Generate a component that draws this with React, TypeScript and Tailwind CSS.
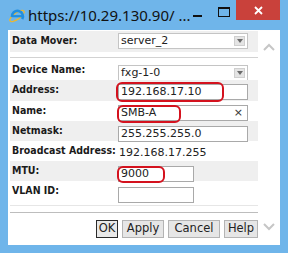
import React from "react";

const labelFont = { fontFamily: '"DejaVu Sans Condensed", "Liberation Sans", sans-serif' };
const valueFont = { fontFamily: '"DejaVu Sans", Verdana, sans-serif' };

const Label = ({ children }: { children: React.ReactNode }) => (
  <div className="w-[108px] shrink-0 pt-[3px] pl-[2px] text-[10.5px] leading-[13px] font-bold text-[#1a1a1a]" style={labelFont}>
    {children}
  </div>
);

const Select = ({ value }: { value: string }) => (
  <div className="w-[130px] h-[16px] bg-white border border-[#c4c4c4] flex items-center justify-between pl-[2px] pr-[2px]">
    <span className="text-[11px] leading-[14px] text-[#222]" style={valueFont}>{value}</span>
    <span className="w-[11px] h-[10px] bg-[#e4e4e4] border border-[#cfcfcf] flex items-center justify-center">
      <span className="w-0 h-0 border-l-[3px] border-r-[3px] border-t-[4px] border-l-transparent border-r-transparent border-t-[#6a6a6a]" />
    </span>
  </div>
);

const Input = ({ value, w, oval, clear }: { value?: string; w: string; oval?: string; clear?: boolean }) => (
  <div className={`relative ${w} h-[16px] bg-white border border-[#a9a9a9] flex items-center justify-between pl-[2px] pr-[4px]`}>
    <span className="text-[11px] leading-[14px] text-[#222]" style={valueFont}>{value}</span>
    {clear && <span className="text-[11px] leading-[14px] text-[#333]" style={valueFont}>×</span>}
    {oval && <div className={`absolute border-2 border-[#d4121e] rounded-[6px] ${oval}`} />}
  </div>
);

const Row = ({ gray, h, children }: { gray?: boolean; h: string; children: React.ReactNode }) => (
  <div className={`flex items-start ${h} ${gray ? "bg-[#efefef]" : "bg-white"}`}>{children}</div>
);

const Btn = ({ children, w, focus }: { children: React.ReactNode; w: string; focus?: boolean }) => (
  <div
    className={`${w} h-[18px] flex items-center justify-center text-[11.5px] text-[#222] ${focus ? "border border-[#2a2a2a] bg-[#e8e8e8]" : "border border-[#b4b4b4] bg-[#e6e6e6]"}`}
    style={valueFont}
  >
    {children}
  </div>
);

export default function App() {
  return (
    <div className="w-[288px] h-[253px] bg-[#6fb5ea] flex flex-col overflow-hidden">
      {/* title bar */}
      <div className="h-[30px] flex items-start shrink-0">
        <svg className="ml-[8px] mt-[6px]" width="18" height="18" viewBox="0 0 18 18">
          <ellipse cx="9" cy="10" rx="8.5" ry="3.2" fill="none" stroke="#e8b735" strokeWidth="1.3" transform="rotate(-35 9 10)" />
          <path d="M4 11 A5.5 5.5 0 1 1 14.2 13.2" fill="none" stroke="#1f8fe0" strokeWidth="2.6" />
          <path d="M4.2 10.2 H14.5" stroke="#1f8fe0" strokeWidth="2.2" />
        </svg>
        <span className="ml-[2px] mt-[5px] text-[15px] leading-[20px] text-[#111]" style={{ fontFamily: '"Noto Sans", "Open Sans", sans-serif' }}>
          https://10.29.130.90/ ...
        </span>
        <div className="ml-auto flex items-start">
          <div className="mt-[15px] w-[9px] h-[2px] bg-[#111] mr-[16px]" />
          <div className="mt-[7px] w-[12px] h-[10px] border border-[#111] border-t-2 mr-[6px]" />
          <div className="w-[44px] h-[20px] bg-[#c9413b] flex items-center justify-center mr-[8px]">
            <svg width="9" height="9" viewBox="0 0 9 9">
              <path d="M1 1 L8 8 M8 1 L1 8" stroke="white" strokeWidth="1.8" />
            </svg>
          </div>
        </div>
      </div>

      {/* content */}
      <div className="mx-[8px] h-[215px] bg-white flex">
        <div className="w-[250px] pl-[2px] pt-[1px] flex flex-col">
          <div className="flex items-start h-[21px] bg-[#efefef]">
            <Label>Data Mover:</Label>
            <div className="pt-[2px]">
              <Select value="server_2" />
            </div>
          </div>
          <div className="h-[5px]" />
          <div className="h-[1px] bg-[#d2d2d2]" />
          <div className="h-[2px]" />

          <Row h="h-[20px]">
            <Label>Device Name:</Label>
            <div className="pt-[5px]"><Select value="fxg-1-0" /></div>
          </Row>
          <Row h="h-[21px]" gray>
            <Label>Address:</Label>
            <div className="pt-[4px]">
              <Input value="192.168.17.10" w="w-[130px]" oval="-left-[3px] -top-[3px] w-[108px] h-[20px]" />
            </div>
          </Row>
          <Row h="h-[20px]">
            <Label>Name:</Label>
            <div className="pt-[4px]">
              <Input value="SMB-A" w="w-[130px]" clear oval="-left-[2px] -top-[1px] w-[64px] h-[18px]" />
            </div>
          </Row>
          <Row h="h-[20px]" gray>
            <Label>Netmask:</Label>
            <div className="pt-[5px]"><Input value="255.255.255.0" w="w-[130px]" /></div>
          </Row>
          <Row h="h-[20px]">
            <Label>Broadcast Address:</Label>
            <div className="pt-[5px] pl-[1px] text-[11px] leading-[14px] text-[#222]" style={valueFont}>192.168.17.255</div>
          </Row>
          <Row h="h-[20px]" gray>
            <Label>MTU:</Label>
            <div className="pt-[5px]">
              <Input value="9000" w="w-[76px]" oval="-left-[2px] -top-[1px] w-[48px] h-[17px]" />
            </div>
          </Row>
          <Row h="h-[24px]">
            <Label>VLAN ID:</Label>
            <div className="pt-[6px]"><Input w="w-[76px]" /></div>
          </Row>

          <div className="h-[1px] bg-[#e6e6e6]" />
          <div className="h-[6px]" />
          <div className="h-[1px] bg-[#bdbdbd]" />
          <div className="flex justify-end gap-[4px] mt-[7px]">
            <Btn w="w-[22px]" focus>OK</Btn>
            <Btn w="w-[42px]">Apply</Btn>
            <Btn w="w-[52px]">Cancel</Btn>
            <Btn w="w-[34px]">Help</Btn>
          </div>
        </div>

        {/* scroll arrows */}
        <div className="flex-1 flex flex-col items-center justify-between pt-[13px] pb-[14px]">
          <svg width="12" height="8" viewBox="0 0 12 8">
            <path d="M1 7 L6 2 L11 7" fill="none" stroke="#c6c6c6" strokeWidth="2" />
          </svg>
          <svg width="12" height="8" viewBox="0 0 12 8">
            <path d="M1 1 L6 6 L11 1" fill="none" stroke="#c6c6c6" strokeWidth="2" />
          </svg>
        </div>
      </div>
    </div>
  );
}
